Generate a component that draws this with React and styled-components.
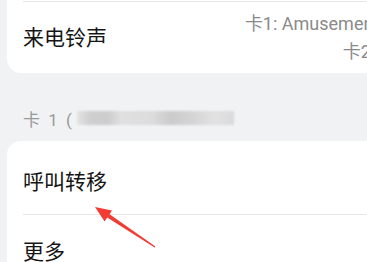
import React from "react";
import styled, { createGlobalStyle } from "styled-components";

const GlobalStyle = createGlobalStyle`
  html, body {
    margin: 0;
    padding: 0;
    background: #f1f2f4;
    overflow: hidden;
  }
  body {
    font-family: Roboto, "Noto Sans CJK SC", sans-serif;
  }
`;

const Page = styled.div`
  position: relative;
  width: 440px;
  height: 262px;
  padding-left: 7px;
  box-sizing: border-box;
`;

const Card = styled.div`
  background: #ffffff;
  border-radius: ${p => (p.open ? "0 0 14px 14px" : "14px 14px 0 0")};
  padding-top: ${p => (p.open ? "1px" : "4px")};
`;

const Divider = styled.div`
  height: 1px;
  margin-left: 16px;
  background: #e8e8ea;
`;

const Row = styled.div`
  display: flex;
  align-items: center;
  justify-content: space-between;
  height: ${p => p.h}px;
  padding: 0 0 0 16px;
`;

const Label = styled.span`
  font-family: "Noto Sans CJK SC", sans-serif;
  font-size: 21px;
  color: #151515;
  margin-top: ${p => p.shift || 0}px;
`;

const Values = styled.div`
  display: flex;
  flex-direction: column;
  align-items: flex-end;
  font-size: 18px;
  line-height: 28px;
  color: #8a8a8a;
  padding-right: 20px;
`;

const SectionHeader = styled.div`
  display: flex;
  align-items: center;
  height: 68px;
  padding: 22px 0 0 16px;
  box-sizing: border-box;
  font-size: 17px;
  color: #9a9a9a;
`;

const HeaderText = styled.span`
  font-family: Roboto, "Noto Sans CJK SC", sans-serif;
  white-space: pre;
  letter-spacing: 2px;
`;

const Blurred = styled.span`
  display: inline-block;
  width: 157px;
  height: 14px;
  margin-left: 3px;
  background: linear-gradient(
    90deg,
    #e4e4e4 0%,
    #cfcfcf 8%,
    #cdcdcd 20%,
    #e0e0e0 28%,
    #dcdcdc 48%,
    #cbcbcb 60%,
    #d6d6d6 75%,
    #e2e2e2 88%,
    #dadada 100%
  );
  filter: blur(0.8px);
`;

const Arrow = styled.svg`
  position: absolute;
  left: 0;
  top: 0;
  pointer-events: none;
`;

export default function App() {
  return (
    <>
      <GlobalStyle />
      <Page>
        <Card open>
          <Divider />
          <Row h={71}>
            <Label shift={-3}>来电铃声</Label>
            <Values>
              <span>卡1: Amusement Park</span>
              <span>卡2: Beep</span>
            </Values>
          </Row>
        </Card>
        <SectionHeader>
          <HeaderText>卡 1 (</HeaderText>
          <Blurred />
        </SectionHeader>
        <Card>
          <Row h={69}>
            <Label>呼叫转移</Label>
          </Row>
          <Divider />
          <Row h={69}>
            <Label>更多</Label>
          </Row>
        </Card>
        <Arrow width="367" height="262" viewBox="0 0 367 262">
          <polygon
            points="95,207 112,210.5 109.6,214.2 155.4,246.5 154.6,247.5 107.2,217.6 104.6,221.4"
            fill="#f23b33"
          />
        </Arrow>
      </Page>
    </>
  );
}
